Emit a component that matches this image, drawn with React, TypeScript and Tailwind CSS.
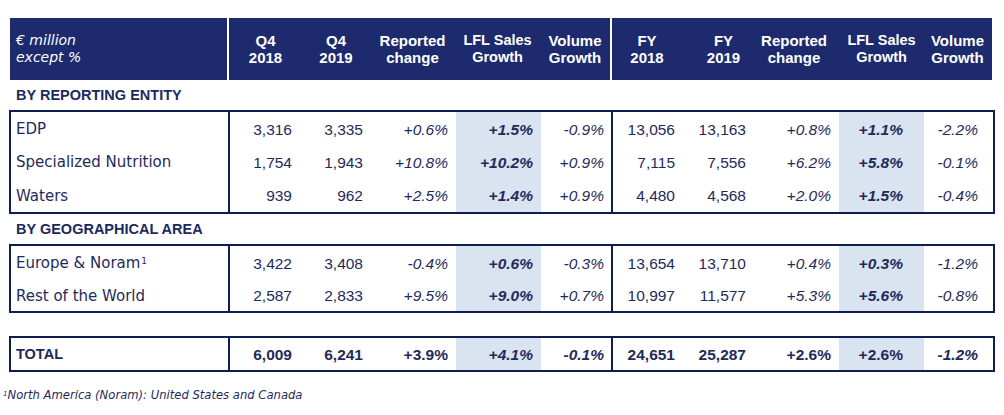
import React from "react";

type S = "n" | "i" | "bi" | "b";
type Cell = [string, S];

const PR = [
  "pr-[11px]",
  "pr-[8px]",
  "pr-[8px]",
  "pr-[8px]",
  "pr-[7px]",
  "pr-[8px]",
  "pr-[14px]",
  "pr-[8px]",
  "pr-[21px]",
  "pr-[15px]",
];

const GRID =
  "grid grid-cols-[219px_73px_68px_85px_85px_72px_70px_77px_79px_85px_69px]";

function styleCls(s: S) {
  if (s === "i") return "italic font-normal";
  if (s === "bi") return "italic font-bold";
  if (s === "b") return "font-bold";
  return "font-normal";
}

function Row({
  label,
  cells,
  h,
  boldLabel,
}: {
  label: React.ReactNode;
  cells: Cell[];
  h: string;
  boldLabel?: boolean;
}) {
  return (
    <>
      <div
        className={`${h} border-r-2 border-[#0e1e4e] pl-[5px] flex items-center pt-[2px] ${
          boldLabel
            ? "font-bold text-[14.5px] font-['Liberation_Sans',sans-serif]"
            : "font-['DejaVu_Sans',sans-serif]"
        }`}
      >
        {label}
      </div>
      {cells.map((c, i) => (
        <div
          key={i}
          className={`${h} flex items-center justify-end pt-[2px] text-[15.5px] ${PR[i]} ${styleCls(
            c[1]
          )} ${i === 3 || i === 8 ? "bg-[#dae3f0]" : ""} ${
            i === 4 ? "border-r-2 border-[#0e1e4e]" : ""
          }`}
        >
          {c[0]}
        </div>
      ))}
    </>
  );
}

const q = (a: string, b: string, c: string, d: string, e: string, f: string, g: string, h: string, i: string, j: string): Cell[] => [
  [a, "n"],
  [b, "n"],
  [c, "i"],
  [d, "bi"],
  [e, "i"],
  [f, "n"],
  [g, "n"],
  [h, "i"],
  [i, "bi"],
  [j, "i"],
];

export default function App() {
  return (
    <div className="w-[1004px] h-[415px] bg-white text-[#1f2a5c] text-[15px] relative overflow-hidden font-['Liberation_Sans',Arial,sans-serif]">
      <div className="pt-[18px] pl-[9px]">
        {/* header */}
        <div className={`${GRID} w-[986px] px-[1px] text-white font-bold leading-[17px]`}>
          <div className="h-[62px] bg-[#1d2b6e] border-r-2 border-white pl-[6px] flex flex-col justify-center italic font-normal text-[14px] font-['DejaVu_Sans',sans-serif]">
            <span>€ million</span>
            <span>except %</span>
          </div>
          {[
            ["Q4", "2018", ""],
            ["Q4", "2019", ""],
            ["Reported", "change", ""],
            ["LFL Sales", "Growth", "text-[14.5px]"],
            ["Volume", "Growth", "border-r-2 border-white"],
            ["FY", "2018", ""],
            ["FY", "2019", "pl-[6px]"],
            ["Reported", "change", "pr-[9px]"],
            ["LFL Sales", "Growth", "pl-[2px] text-[14.5px]"],
            ["Volume", "Growth", ""],
          ].map(([a, b, extra], i) => (
            <div
              key={i}
              className={`h-[62px] bg-[#1d2b6e] flex flex-col items-center justify-center text-center ${extra}`}
            >
              <span>{a}</span>
              <span>{b}</span>
            </div>
          ))}
        </div>

        <div className="h-[30px] flex items-center pl-[7px] pt-[2px] font-bold text-[14.5px] text-[#1b2a5e]">
          BY REPORTING ENTITY
        </div>
        <div className={`${GRID} w-[986px] border-2 border-[#0e1e4e]`}>
          <Row label="EDP" h="h-[33px]" cells={q("3,316", "3,335", "+0.6%", "+1.5%", "-0.9%", "13,056", "13,163", "+0.8%", "+1.1%", "-2.2%")} />
          <Row label="Specialized Nutrition" h="h-[33px]" cells={q("1,754", "1,943", "+10.8%", "+10.2%", "+0.9%", "7,115", "7,556", "+6.2%", "+5.8%", "-0.1%")} />
          <Row label="Waters" h="h-[34px]" cells={q("939", "962", "+2.5%", "+1.4%", "+0.9%", "4,480", "4,568", "+2.0%", "+1.5%", "-0.4%")} />
        </div>

        <div className="h-[30px] flex items-center pl-[7px] pt-[2px] font-bold text-[14.5px] text-[#1b2a5e]">
          BY GEOGRAPHICAL AREA
        </div>
        <div className={`${GRID} w-[986px] border-2 border-[#0e1e4e]`}>
          <Row
            label={
              <span>
                Europe &amp; Noram<sup className="text-[9px] ml-[1px]">1</sup>
              </span>
            }
            h="h-[33px]"
            cells={q("3,422", "3,408", "-0.4%", "+0.6%", "-0.3%", "13,654", "13,710", "+0.4%", "+0.3%", "-1.2%")}
          />
          <Row label="Rest of the World" h="h-[32px]" cells={q("2,587", "2,833", "+9.5%", "+9.0%", "+0.7%", "10,997", "11,577", "+5.3%", "+5.6%", "-0.8%")} />
        </div>

        <div className="h-[23px]" />
        <div className={`${GRID} w-[986px] border-2 border-[#0e1e4e]`}>
          <Row
            label="TOTAL"
            boldLabel
            h="h-[32px]"
            cells={[
              ["6,009", "b"],
              ["6,241", "b"],
              ["+3.9%", "b"],
              ["+4.1%", "bi"],
              ["-0.1%", "bi"],
              ["24,651", "b"],
              ["25,287", "b"],
              ["+2.6%", "b"],
              ["+2.6%", "b"],
              ["-1.2%", "bi"],
            ]}
          />
        </div>
      </div>
      <div className="pl-[3px] pt-[16px] text-[11.6px] italic leading-[14px] font-['DejaVu_Sans',sans-serif]">
        <sup className="text-[7px]">1</sup>North America (Noram): United States and Canada
      </div>
    </div>
  );
}
